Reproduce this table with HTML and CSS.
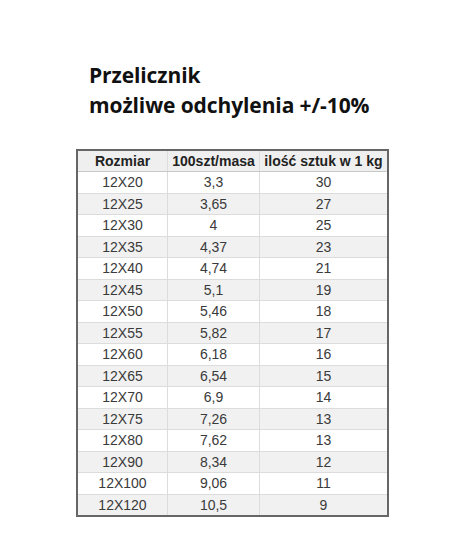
FILE: index.html
```html
<!DOCTYPE html>
<html lang="pl">
<head>
<meta charset="utf-8">
<link rel="stylesheet" href="styles.css">
</head>
<body>
<div class="page">
  <h1 class="title">Przelicznik<br>możliwe odchylenia +/-10%</h1>
  <table class="conv">
    <thead>
      <tr><th>Rozmiar</th><th>100szt/masa</th><th>ilość sztuk w 1 kg</th></tr>
    </thead>
    <tbody>
      <tr><td>12X20</td><td>3,3</td><td>30</td></tr>
      <tr><td>12X25</td><td>3,65</td><td>27</td></tr>
      <tr><td>12X30</td><td>4</td><td>25</td></tr>
      <tr><td>12X35</td><td>4,37</td><td>23</td></tr>
      <tr><td>12X40</td><td>4,74</td><td>21</td></tr>
      <tr><td>12X45</td><td>5,1</td><td>19</td></tr>
      <tr><td>12X50</td><td>5,46</td><td>18</td></tr>
      <tr><td>12X55</td><td>5,82</td><td>17</td></tr>
      <tr><td>12X60</td><td>6,18</td><td>16</td></tr>
      <tr><td>12X65</td><td>6,54</td><td>15</td></tr>
      <tr><td>12X70</td><td>6,9</td><td>14</td></tr>
      <tr><td>12X75</td><td>7,26</td><td>13</td></tr>
      <tr><td>12X80</td><td>7,62</td><td>13</td></tr>
      <tr><td>12X90</td><td>8,34</td><td>12</td></tr>
      <tr><td>12X100</td><td>9,06</td><td>11</td></tr>
      <tr><td>12X120</td><td>10,5</td><td>9</td></tr>
    </tbody>
  </table>
</div>
</body>
</html>
```

FILE: styles.css
```css
html, body {
  margin: 0;
  padding: 0;
  background: #ffffff;
}
.page {
  padding: 60px 0 0 76px;
}
.title {
  margin: 0 0 0 13px;
  font-family: "Open Sans", "Noto Sans", sans-serif;
  font-weight: 700;
  font-size: 21px;
  line-height: 30px;
  color: #111;
  letter-spacing: -0.1px;
}
.conv {
  margin-top: 29px;
  border-collapse: collapse;
  border: 2px solid #666;
  font-family: "Liberation Sans", Arial, sans-serif;
  font-size: 14px;
  color: #3a3a3a;
}
.conv th, .conv td {
  border: 1px solid #dcdcdc;
  text-align: center;
  padding: 0;
  height: 20.5px;
}
.conv th {
  background: #efefef;
  color: #222;
  font-weight: 700;
  height: 20px;
  border-bottom-color: #c8c8c8;
}
.conv th:nth-child(1) { width: 89px; }
.conv th:nth-child(2) { width: 91px; }
.conv th:nth-child(3) { width: 127px; }
.conv tbody tr:nth-child(even) td {
  background: #f1f1f1;
}
```
